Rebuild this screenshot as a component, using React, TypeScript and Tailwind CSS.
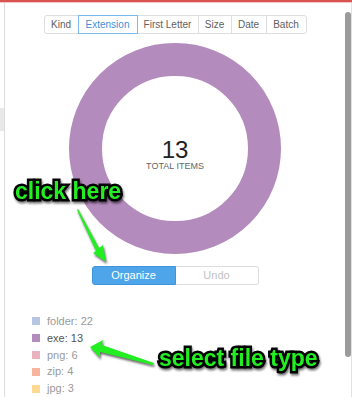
import React from "react";

const tabs = [
  { label: "Kind", w: "w-[35px]" },
  { label: "Extension", w: "w-[60px]", active: true },
  { label: "First Letter", w: "w-[62px]" },
  { label: "Size", w: "w-[34px]" },
  { label: "Date", w: "w-[36px]" },
  { label: "Batch", w: "w-[41px]" },
];

const legend = [
  { label: "folder: 22", color: "bg-[#b7c6e3]", text: "text-[#9a9a9a]" },
  { label: "exe: 13", color: "bg-[#b48bbd]", text: "text-[#555]" },
  { label: "png: 6", color: "bg-[#eab1bf]", text: "text-[#9a9a9a]" },
  { label: "zip: 4", color: "bg-[#f6b69d]", text: "text-[#9a9a9a]" },
  { label: "jpg: 3", color: "bg-[#fdd993]", text: "text-[#9a9a9a]" },
];

const annot =
  "absolute font-bold text-[23px] leading-[23px] text-[#22ee22] whitespace-nowrap [-webkit-text-stroke:5px_#000] [paint-order:stroke_fill] [filter:drop-shadow(1px_2px_1px_rgba(0,0,0,0.55))]";

export default function App() {
  return (
    <div className="relative w-[352px] h-[397px] overflow-hidden bg-white font-['Liberation_Sans',Arial,sans-serif]">
      <div className="h-[2px] bg-[#db5350]" />
      <div className="h-[1px] bg-[#ecc8c8]" />
      <div className="flex h-[394px]">
        <div className="w-[4px] flex flex-col">
          <div className="mt-[105px] h-[23px] bg-[#e8e8e8]" />
        </div>
        <div className="w-[1px] bg-[#dcdcdc]" />
        <div className="w-[340px] flex flex-col items-center">
          <div className="mt-[12px] flex rounded-[3px]">
            {tabs.map((t, i) => (
              <div
                key={t.label}
                className={`${t.w} h-[19px] flex items-center justify-center text-[10px] border ${
                  i > 0 ? "-ml-px" : ""
                } ${i === 0 ? "rounded-l-[3px]" : ""} ${i === tabs.length - 1 ? "rounded-r-[3px]" : ""} ${
                  t.active
                    ? "relative z-10 border-[#7ab9ea] text-[#3f8fd8]"
                    : "border-[#dedede] text-[#606060]"
                }`}
              >
                {t.label}
              </div>
            ))}
          </div>
          <div className="mt-[9px] w-[212px] h-[212px] rounded-full border-[33px] border-[#b48bbd] flex flex-col items-center justify-center pt-[11px]">
            <div className="text-[24px] leading-[24px] text-[#222]">13</div>
            <div className="-mt-px text-[9px] leading-[10px] text-[#666]">TOTAL ITEMS</div>
          </div>
          <div className="mt-[12px] flex">
            <div className="w-[84px] h-[19px] flex items-center justify-center rounded-l-[3px] bg-[#4ea5ea] border border-[#3d95dd] text-white text-[11px]">
              Organize
            </div>
            <div className="w-[83px] h-[19px] flex items-center justify-center rounded-r-[3px] border border-l-0 border-[#dedede] text-[#c2c2c2] text-[11px]">
              Undo
            </div>
          </div>
          <div className="mt-[28px] self-stretch pl-[27px] flex flex-col">
            {legend.map((l) => (
              <div key={l.label} className="h-[16.8px] flex items-center">
                <div className={`w-[8px] h-[8px] ${l.color}`} />
                <div className={`ml-[7px] text-[11px] leading-[13px] ${l.text}`}>{l.label}</div>
              </div>
            ))}
          </div>
        </div>
        <div className="w-[6px] flex flex-col">
          <div className="mt-[9px] h-[345px] rounded-[3px] bg-[#9b9b9b]" />
        </div>
        <div className="w-[1px] bg-[#e2e2e2]" />
      </div>

      <svg
        className="absolute left-0 top-0 pointer-events-none [filter:drop-shadow(1px_2px_1px_rgba(0,0,0,0.6))]"
        width="352"
        height="397"
        viewBox="0 0 352 397"
      >
        <polygon points="78,209 99,248 103,245 106,262 93,253 96,251 77,210" fill="#22ee22" />
        <polygon points="90,347 103,340 102,345 154,363 153,365 100,352 100,358" fill="#22ee22" />
      </svg>

      <div className={`${annot} left-[15px] top-[180px]`}>click here</div>
      <div className={`${annot} left-[159px] top-[347px]`}>select file type</div>
    </div>
  );
}
